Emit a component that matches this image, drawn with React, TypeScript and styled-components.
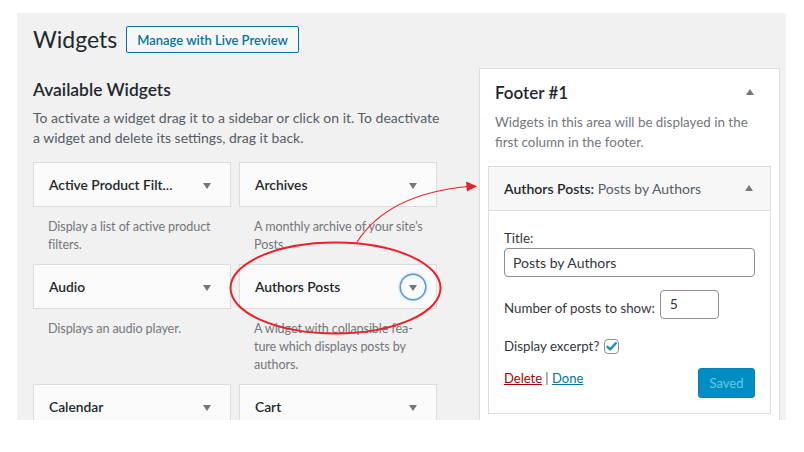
import React from "react";
import styled, { createGlobalStyle } from "styled-components";

const FONT = `"Lato", "Segoe UI", "Liberation Sans", sans-serif`;

const Global = createGlobalStyle`
  html, body { margin: 0; padding: 0; background: #fff; }
  body { font-family: ${FONT}; }
  * { box-sizing: border-box; }
`;

const Page = styled.div`
  position: relative;
  width: 804px;
  height: 452px;
  padding: 13px 18px 0 17px;
`;

const Screen = styled.div`
  height: 407px;
  background: #f1f1f1;
  overflow: hidden;
  padding: 13px 0 0 16px;
`;

const Header = styled.div`
  display: flex;
  align-items: center;
  gap: 9px;
  height: 27px;
`;

const PageTitle = styled.h1`
  margin: 0;
  font-size: 23px;
  font-weight: 400;
  line-height: 27px;
  color: #23282d;
`;

const ActionButton = styled.button`
  height: 27px;
  padding: 0 10px;
  border: 1px solid #0073aa;
  border-radius: 2px;
  background: #f7f7f7;
  color: #0073aa;
  font: 600 13px ${FONT};
`;

const Columns = styled.div`
  display: flex;
  align-items: flex-start;
  margin-top: 15px;
`;

const LeftCol = styled.div`
  width: 412px;
  padding-top: 10px;
`;

const SectionTitle = styled.h2`
  margin: 0;
  font-size: 17.4px;
  font-weight: 600;
  line-height: 24px;
  color: #23282d;
`;

const Intro = styled.p`
  margin: 6px 0 0;
  font-size: 14px;
  line-height: 19.5px;
  color: #555d66;
`;

const WidgetGrid = styled.div`
  display: grid;
  grid-template-columns: 198px 198px;
  column-gap: 8px;
  margin-top: 15px;
`;

const WidgetItem = styled.div`
  padding-bottom: 10px;
`;

const WidgetTop = styled.div`
  height: 45px;
  display: flex;
  align-items: center;
  justify-content: space-between;
  background: #fafafa;
  border: 1px solid #dcdcde;
  padding-left: 15px;
`;

const WidgetName = styled.h3`
  margin: 0;
  font-size: 13.8px;
  font-weight: 600;
  color: #23282d;
  white-space: nowrap;
`;

const Toggle = styled.span<{ $focused?: boolean; $right?: number }>`
  width: 24px;
  height: 24px;
  flex: none;
  margin-right: ${(p) => p.$right ?? 11}px;
  border-radius: 50%;
  display: flex;
  align-items: center;
  justify-content: center;
  box-shadow: ${(p) =>
    p.$focused ? "0 0 0 1.5px #5b9dd9, 0 0 3px 1px rgba(30,140,190,0.5)" : "none"};
`;

const Caret = styled.span<{ $up?: boolean }>`
  width: 0;
  height: 0;
  border-left: 4.5px solid transparent;
  border-right: 4.5px solid transparent;
  ${(p) =>
    p.$up
      ? "border-bottom: 6px solid #72777c; margin-top: -2px;"
      : "border-top: 6px solid #72777c; margin-top: 2px;"}
`;

const WidgetDesc = styled.p`
  margin: 0;
  padding: 11px 8px 0 15px;
  font-size: 12.6px;
  letter-spacing: -0.1px;
  line-height: 18px;
  color: #72777c;
  hyphens: manual;
`;

const Sidebar = styled.div`
  width: 301px;
  margin-left: 34px;
  min-height: 400px;
  background: #fff;
  border: 1px solid #dcdcde;
  padding: 12px 8px 0;
`;

const SidebarHead = styled.div`
  display: flex;
  align-items: center;
  justify-content: space-between;
  padding-left: 7px;
`;

const SidebarTitle = styled.h2`
  margin: 0;
  font-size: 17px;
  font-weight: 600;
  line-height: 24px;
  color: #23282d;
`;

const SidebarDesc = styled.p`
  margin: 7px 0 0;
  padding: 0 7px;
  font-size: 13.4px;
  line-height: 20px;
  color: #72777c;
`;

const WidgetBox = styled.div`
  margin-top: 14px;
  border: 1px solid #dcdcde;
  background: #fff;
`;

const BoxHead = styled.div`
  height: 44px;
  display: flex;
  align-items: center;
  justify-content: space-between;
  padding-left: 15px;
  background: #f7f7f7;
  border-bottom: 1px solid #dcdcde;
  font-size: 14px;
  white-space: nowrap;
`;

const BoxTitle = styled.strong`
  font-weight: 600;
  color: #23282d;
`;

const BoxSubtitle = styled.span`
  font-weight: 400;
  color: #555d66;
`;

const Form = styled.div`
  padding: 17px 15px 15px;
  font-size: 13.3px;
  color: #32373c;
`;

const Label = styled.div`
  line-height: 20px;
`;

const TextInput = styled.input`
  display: block;
  width: 100%;
  height: 29px;
  padding: 0 8px;
  border: 1px solid #8c8f94;
  border-radius: 4px;
  font: 14px ${FONT};
  color: #32373c;
  background: #fff;
`;

const Row = styled.div<{ $mt: number }>`
  display: flex;
  align-items: center;
  gap: 5px;
  margin-top: ${(p) => p.$mt}px;
  line-height: 20px;
`;

const NumberInput = styled.input`
  width: 59px;
  height: 29px;
  padding: 0 0 3px 9px;
  border: 1px solid #8c8f94;
  border-radius: 4px;
  font: 14px ${FONT};
  color: #32373c;
  background: #fff;
`;

const LowLabel = styled.span`
  margin-top: 7px;
`;

const Check = styled.span`
  width: 15px;
  height: 15px;
  border: 1px solid #8c8f94;
  border-radius: 4px;
  display: flex;
  align-items: center;
  justify-content: center;
  background: #fff;
`;

const Actions = styled.div`
  display: flex;
  justify-content: space-between;
  align-items: flex-start;
  margin-top: 12px;
  line-height: 20px;
  font-size: 13px;
  color: #555d66;
`;

const Link = styled.a<{ $danger?: boolean }>`
  color: ${(p) => (p.$danger ? "#a00" : "#0073aa")};
  text-decoration: underline;
`;

const SaveButton = styled.button`
  width: 57px;
  height: 30px;
  border: 1px solid #0085ba;
  border-radius: 3px;
  background: #008ec2;
  color: #66c6e4;
  font: 13px ${FONT};
`;

const Overlay = styled.svg`
  position: absolute;
  left: 0;
  top: 0;
  pointer-events: none;
`;

type W = { name: string; desc?: string; focused?: boolean };

const widgets: W[] = [
  { name: "Active Product Filt...", desc: "Display a list of active product filters." },
  { name: "Archives", desc: "A monthly archive of your site’s Posts" },
  { name: "Audio", desc: "Displays an audio player." },
  {
    name: "Authors Posts",
    desc: "A widget with collapsible fea\u00ADture which displays posts by authors.",
    focused: true,
  },
  { name: "Calendar" },
  { name: "Cart" },
];

export default function App() {
  return (
    <Page>
      <Global />
      <Screen>
        <Header>
          <PageTitle>Widgets</PageTitle>
          <ActionButton>Manage with Live Preview</ActionButton>
        </Header>
        <Columns>
          <LeftCol>
            <SectionTitle>Available Widgets</SectionTitle>
            <Intro>
              To activate a widget drag it to a sidebar or click on it. To deactivate a widget and
              delete its settings, drag it back.
            </Intro>
            <WidgetGrid>
              {widgets.map((w) => (
                <WidgetItem key={w.name}>
                  <WidgetTop>
                    <WidgetName>{w.name}</WidgetName>
                    <Toggle $focused={w.focused}>
                      <Caret />
                    </Toggle>
                  </WidgetTop>
                  {w.desc && <WidgetDesc>{w.desc}</WidgetDesc>}
                </WidgetItem>
              ))}
            </WidgetGrid>
          </LeftCol>
          <Sidebar>
            <SidebarHead>
              <SidebarTitle>Footer #1</SidebarTitle>
              <Toggle $right={9}>
                <Caret $up />
              </Toggle>
            </SidebarHead>
            <SidebarDesc>
              Widgets in this area will be displayed in the first column in the footer.
            </SidebarDesc>
            <WidgetBox>
              <BoxHead>
                <span>
                  <BoxTitle>Authors Posts:</BoxTitle>
                  <BoxSubtitle> Posts by Authors</BoxSubtitle>
                </span>
                <Toggle $right={9}>
                  <Caret $up />
                </Toggle>
              </BoxHead>
              <Form>
                <Label>Title:</Label>
                <TextInput defaultValue="Posts by Authors" />
                <Row $mt={13}>
                  <LowLabel>Number of posts to show:</LowLabel>
                  <NumberInput defaultValue="5" />
                </Row>
                <Row $mt={17}>
                  <span>Display excerpt?</span>
                  <Check>
                    <svg width="13" height="13" viewBox="0 0 13 13">
                      <path
                        d="M2.5 6.8 L5.2 9.4 L10.8 3.2"
                        fill="none"
                        stroke="#1e8cbe"
                        strokeWidth="2.4"
                        strokeLinecap="round"
                        strokeLinejoin="round"
                      />
                    </svg>
                  </Check>
                </Row>
                <Actions>
                  <span>
                    <Link $danger>Delete</Link> | <Link>Done</Link>
                  </span>
                  <SaveButton>Saved</SaveButton>
                </Actions>
              </Form>
            </WidgetBox>
          </Sidebar>
        </Columns>
      </Screen>
      <Overlay width="804" height="452" viewBox="0 0 804 452">
        <ellipse cx="335.5" cy="288" rx="105" ry="45.5" fill="none" stroke="#e8212b" strokeWidth="2" />
        <path d="M357 242 Q388 194 468 186.5" fill="none" stroke="#e8212b" strokeWidth="1.2" />
        <path d="M477 186.3 L466 181.5 L467 191.5 Z" fill="#e8212b" />
      </Overlay>
    </Page>
  );
}
